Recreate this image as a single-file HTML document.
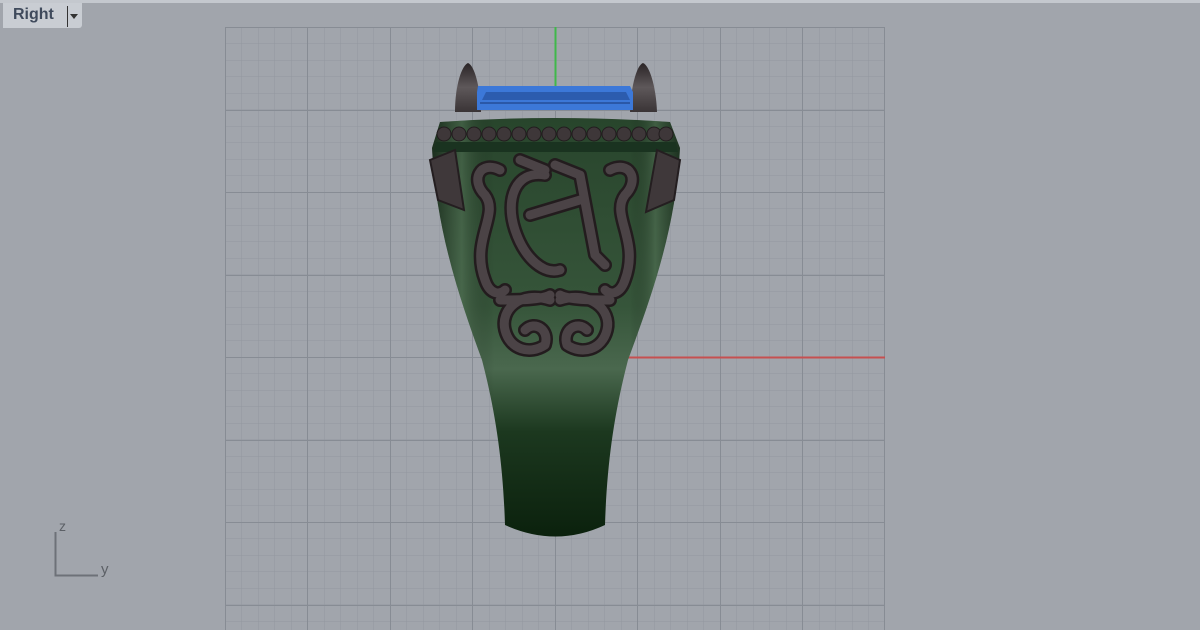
<!DOCTYPE html>
<html><head><style>
html,body{margin:0;padding:0;width:1200px;height:630px;overflow:hidden;background:#a1a5ac;font-family:"Liberation Sans",sans-serif}
</style></head><body>
<svg width="1200" height="630" viewBox="0 0 1200 630" xmlns="http://www.w3.org/2000/svg" style="position:absolute;left:0;top:0">
<defs>
<pattern id="minor" x="225" y="27" width="16.5" height="16.5" patternUnits="userSpaceOnUse">
<path d="M0 0V16.5M0 0H16.5" stroke="#93989f" stroke-width="1" fill="none"/>
</pattern>
<linearGradient id="body" x1="0" y1="0" x2="0" y2="1">
<stop offset="0" stop-color="#28452c"/>
<stop offset="0.45" stop-color="#36553a"/>
<stop offset="0.6" stop-color="#4a684e"/>
<stop offset="0.75" stop-color="#1c381f"/>
<stop offset="1" stop-color="#0b210d"/>
</linearGradient>
<linearGradient id="side" x1="0" y1="0" x2="1" y2="0">
<stop offset="0" stop-color="#000" stop-opacity="0.35"/>
<stop offset="0.12" stop-color="#6a8a6c" stop-opacity="0.35"/>
<stop offset="0.25" stop-color="#000" stop-opacity="0"/>
<stop offset="0.8" stop-color="#000" stop-opacity="0"/>
<stop offset="0.9" stop-color="#6a8a6c" stop-opacity="0.35"/>
<stop offset="1" stop-color="#000" stop-opacity="0.3"/>
</linearGradient>
<linearGradient id="prong" x1="0" y1="0" x2="0" y2="1">
<stop offset="0" stop-color="#2a2426"/><stop offset="0.5" stop-color="#5e585a"/><stop offset="1" stop-color="#3a3436"/>
</linearGradient>
</defs>
<rect x="0" y="0" width="1200" height="630" fill="#a1a5ac"/>
<rect x="0" y="0" width="1200" height="3" fill="#c4c8ce"/>
<rect x="225" y="27" width="660" height="603" fill="url(#minor)"/>
<g stroke="#878c94" stroke-width="1">
<path d="M225.5 27V630M307.5 27V630M390.5 27V630M472.5 27V630M637.5 27V630M720.5 27V630M802.5 27V630M884.5 27V630"/>
<path d="M225 27.5H885M225 110.5H885M225 192.5H885M225 275.5H885M225 440.5H885M225 522.5H885M225 605.5H885M225 357.5H555"/>
<path d="M555.5 85V630"/>
</g>
<path d="M555.5 27V86" stroke="#3fb84a" stroke-width="2"/>
<path d="M620 357.5H885" stroke="#c65050" stroke-width="2"/>
<path d="M455 112 C455 85 462 65 468 63 C474 65 480 85 481 112Z" fill="url(#prong)"/>
<path d="M630 112 C631 85 637 65 643 63 C649 65 656 85 657 112Z" fill="url(#prong)"/>
<path d="M478 86 H630 L633 92 V110 H477 V92Z" fill="#3c78d8"/>
<path d="M486 92 H626 L630 100 H482Z" fill="#2c5cae"/>
<path d="M480 103 H630" stroke="#2a58a8" stroke-width="2"/>
<path d="M440 122 Q555 114 670 122 L680 148 C676 230 650 300 628 360 C615 410 607 460 605 525 Q556 548 505 525 C503 460 495 410 482 360 C460 300 436 230 432 148Z" fill="url(#body)"/>
<path d="M440 122 Q555 114 670 122 L680 148 C676 230 650 300 628 360 C615 410 607 460 605 525 Q556 548 505 525 C503 460 495 410 482 360 C460 300 436 230 432 148Z" fill="url(#side)"/>
<path d="M436 142 H676 L678 152 H434Z" fill="#1a3320"/>
<g fill="#3e3739" stroke="#221c1e">
<circle cx="444" cy="134" r="7"/><circle cx="459" cy="134" r="7"/><circle cx="474" cy="134" r="7"/><circle cx="489" cy="134" r="7"/><circle cx="504" cy="134" r="7"/><circle cx="519" cy="134" r="7"/><circle cx="534" cy="134" r="7"/><circle cx="549" cy="134" r="7"/><circle cx="564" cy="134" r="7"/><circle cx="579" cy="134" r="7"/><circle cx="594" cy="134" r="7"/><circle cx="609" cy="134" r="7"/><circle cx="624" cy="134" r="7"/><circle cx="639" cy="134" r="7"/><circle cx="654" cy="134" r="7"/><circle cx="666" cy="134" r="7"/>
</g>
<path d="M430 160 L455 150 L464 210 L438 200Z" fill="#3f383a" stroke="#241e20" stroke-width="2"/>
<path d="M680 160 L657 150 L646 212 L674 200Z" fill="#3f383a" stroke="#241e20" stroke-width="2"/>
<g fill="none" stroke="#231c1e" stroke-width="14" stroke-linecap="round" stroke-linejoin="round">
<path d="M500 170 C480 160 470 180 485 195 C500 215 470 240 485 280 C490 295 500 295 505 290"/>
<path d="M610 170 C630 160 640 180 625 195 C610 215 640 240 625 280 C620 295 610 295 605 290"/>
<path d="M545 175 C515 170 505 200 515 230 C525 260 545 275 560 270"/>
<path d="M530 215 L580 200"/>
<path d="M555 165 L580 175 L595 255 L605 265"/>
<path d="M520 160 L545 170"/>
<path d="M550 300 C520 290 500 310 505 330 C510 350 530 355 545 345 C550 330 535 320 525 330"/>
<path d="M560 300 C590 290 612 310 607 330 C602 350 582 355 567 345 C562 330 577 320 587 330"/>
<path d="M500 300 C520 300 540 300 550 295 M610 300 C590 300 570 300 560 295"/>
</g>
<g fill="none" stroke="#4b4346" stroke-width="9" stroke-linecap="round" stroke-linejoin="round">
<path d="M500 170 C480 160 470 180 485 195 C500 215 470 240 485 280 C490 295 500 295 505 290"/>
<path d="M610 170 C630 160 640 180 625 195 C610 215 640 240 625 280 C620 295 610 295 605 290"/>
<path d="M545 175 C515 170 505 200 515 230 C525 260 545 275 560 270"/>
<path d="M530 215 L580 200"/>
<path d="M555 165 L580 175 L595 255 L605 265"/>
<path d="M520 160 L545 170"/>
<path d="M550 300 C520 290 500 310 505 330 C510 350 530 355 545 345 C550 330 535 320 525 330"/>
<path d="M560 300 C590 290 612 310 607 330 C602 350 582 355 567 345 C562 330 577 320 587 330"/>
<path d="M500 300 C520 300 540 300 550 295 M610 300 C590 300 570 300 560 295"/>
</g>
<path d="M55.5 532V575.5H98" stroke="#6d7178" stroke-width="2" fill="none"/>
<text x="59" y="531" font-size="14" fill="#5c6066">z</text>
<text x="101" y="574" font-size="15" fill="#5c6066">y</text>
</svg>
<div style="position:absolute;left:3px;top:3px;width:79px;height:25px;background:#c9cdd3;border-radius:0 0 3px 0"></div>
<div style="position:absolute;left:13px;top:6px;font-size:16px;font-weight:bold;color:#3f4a5c">Right</div>
<div style="position:absolute;left:67px;top:6px;width:1px;height:21px;background:#333"></div>
<div style="position:absolute;left:70px;top:14px;width:0;height:0;border-left:4px solid transparent;border-right:4px solid transparent;border-top:5px solid #333"></div>
</body></html>
